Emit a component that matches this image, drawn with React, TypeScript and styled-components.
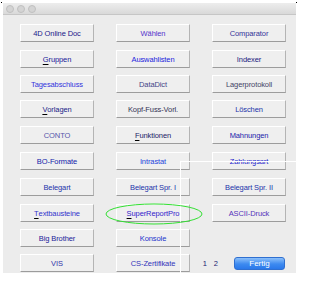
import React from "react";
import styled, { createGlobalStyle } from "styled-components";

const Global = createGlobalStyle`
  html, body { margin: 0; padding: 0; background: #ffffff; }
  body { font-family: "Liberation Sans", Arial, sans-serif; }
  #root { width: 309px; height: 281px; position: relative; overflow: hidden; }
`;

const Page = styled.div`
  position: relative;
  width: 309px;
  height: 281px;
  padding: 3px 0 0 3px;
  box-sizing: border-box;
`;

const Window = styled.div`
  width: 293px;
  height: 270px;
  background: #ececec;
  display: flex;
  flex-direction: column;
`;

const TitleBar = styled.div`
  height: 12px;
  background: linear-gradient(#ededed, #d9d9d9);
  border-bottom: 1px solid #c6c6c6;
  display: flex;
  align-items: center;
  gap: 3px;
  padding-left: 3px;
  box-sizing: border-box;
`;

const Light = styled.span`
  width: 8px;
  height: 8px;
  border-radius: 50%;
  background: #d4d4d4;
  border: 1px solid #c0c0c0;
  box-sizing: border-box;
`;

const Grid = styled.div`
  display: grid;
  grid-template-columns: 74px 74px 74px;
  column-gap: 22px;
  grid-template-rows: 26px 25px 25px 26px 26px 26px 26px 25px 25px 19px;
  padding: 9px 0 0 17px;
`;

const Btn = styled.div<{ $c: string }>`
  height: 18px;
  box-sizing: border-box;
  background: #efefef;
  border-top: 1px solid #ffffff;
  border-left: 1px solid #ffffff;
  border-bottom: 1px solid #9c9c9c;
  border-right: 1px solid #b4b4b4;
  display: flex;
  align-items: center;
  justify-content: center;
  font-size: 7.5px;
  letter-spacing: -0.1px;
  color: ${(p) => p.$c};
  white-space: nowrap;
  overflow: hidden;
`;

const Mn = styled.span`
  text-decoration: underline;
  text-decoration-color: #000000;
  text-underline-offset: 2px;
`;

const Empty = styled.div``;

const Pager = styled.div`
  justify-self: end;
  margin-right: 1px;
  height: 19px;
  display: flex;
  align-items: center;
  font-size: 7.5px;
  color: #1a1a70;
`;

const PageNum = styled.span<{ $gap: number }>`
  margin-right: ${(p) => p.$gap}px;
`;

const Fertig = styled.div`
  width: 51px;
  height: 13px;
  border-radius: 3px;
  background: linear-gradient(#8cc0fa, #3d8af0 55%, #2a78ea);
  border: 1px solid #2f6fd0;
  box-sizing: border-box;
  color: #ffffff;
  font-size: 8px;
  display: flex;
  align-items: center;
  justify-content: center;
`;

const Overlay = styled.svg`
  position: absolute;
  left: 0;
  top: 0;
  pointer-events: none;
`;

type B = { t: string; c: string; m?: boolean } | null;

const rows: B[][] = [
  [{ t: "4D Online Doc", c: "#1a1a8a" }, { t: "Wählen", c: "#5533cc" }, { t: "Comparator", c: "#333399" }],
  [{ t: "Gruppen", c: "#1a1a99", m: true }, { t: "Auswahlisten", c: "#2222dd" }, { t: "Indexer", c: "#1a1a80" }],
  [{ t: "Tagesabschluss", c: "#3333dd" }, { t: "DataDict", c: "#444488" }, { t: "Lagerprotokoll", c: "#444466" }],
  [{ t: "Vorlagen", c: "#222288", m: true }, { t: "Kopf-Fuss-Vorl.", c: "#333355" }, { t: "Löschen", c: "#2233aa" }],
  [{ t: "CONTO", c: "#5555aa" }, { t: "Funktionen", c: "#222266", m: true }, { t: "Mahnungen", c: "#2222aa" }],
  [{ t: "BO-Formate", c: "#1122aa" }, { t: "Intrastat", c: "#2244dd" }, { t: "Zahlungsart", c: "#2222cc" }],
  [{ t: "Belegart", c: "#2233aa" }, { t: "Belegart Spr. I", c: "#2233aa" }, { t: "Belegart Spr. II", c: "#2233aa" }],
  [{ t: "Textbausteine", c: "#3333cc", m: true }, { t: "SuperReportPro", c: "#3322cc", m: true }, { t: "ASCII-Druck", c: "#5533bb" }],
  [{ t: "Big Brother", c: "#1a2299" }, { t: "Konsole", c: "#2233cc" }, null],
  [{ t: "VIS", c: "#3333aa" }, { t: "CS-Zertifikate", c: "#3333bb" }, null],
];

function Label({ b }: { b: { t: string; m?: boolean } }) {
  if (!b.m) return <>{b.t}</>;
  return (
    <>
      <Mn>{b.t[0]}</Mn>
      {b.t.slice(1)}
    </>
  );
}

export default function App() {
  return (
    <Page>
      <Global />
      <Window>
        <TitleBar>
          <Light />
          <Light />
          <Light />
        </TitleBar>
        <Grid>
          {rows.map((r, i) =>
            r.map((b, j) => {
              if (i === 9 && j === 2)
                return (
                  <Pager key={`${i}-${j}`}>
                    <PageNum $gap={7}>1</PageNum>
                    <PageNum $gap={16}>2</PageNum>
                    <Fertig>Fertig</Fertig>
                  </Pager>
                );
              if (!b) return <Empty key={`${i}-${j}`} />;
              return (
                <Btn key={`${i}-${j}`} $c={b.c}>
                  <Label b={b} />
                </Btn>
              );
            })
          )}
        </Grid>
      </Window>
      <Overlay width={309} height={281} viewBox="0 0 309 281">
        <line x1={180} y1={161.5} x2={298} y2={161.5} stroke="#ffffff" strokeWidth={1} />
        <line x1={180.5} y1={161} x2={180.5} y2={273} stroke="#ffffff" strokeWidth={1} />
        <ellipse cx={154} cy={214} rx={48} ry={10} fill="none" stroke="#33e033" strokeWidth={1} />
        <rect x={1} y={2} width={1} height={1} fill="#000" />
        <rect x={296} y={2} width={1} height={1} fill="#000" />
      </Overlay>
    </Page>
  );
}
